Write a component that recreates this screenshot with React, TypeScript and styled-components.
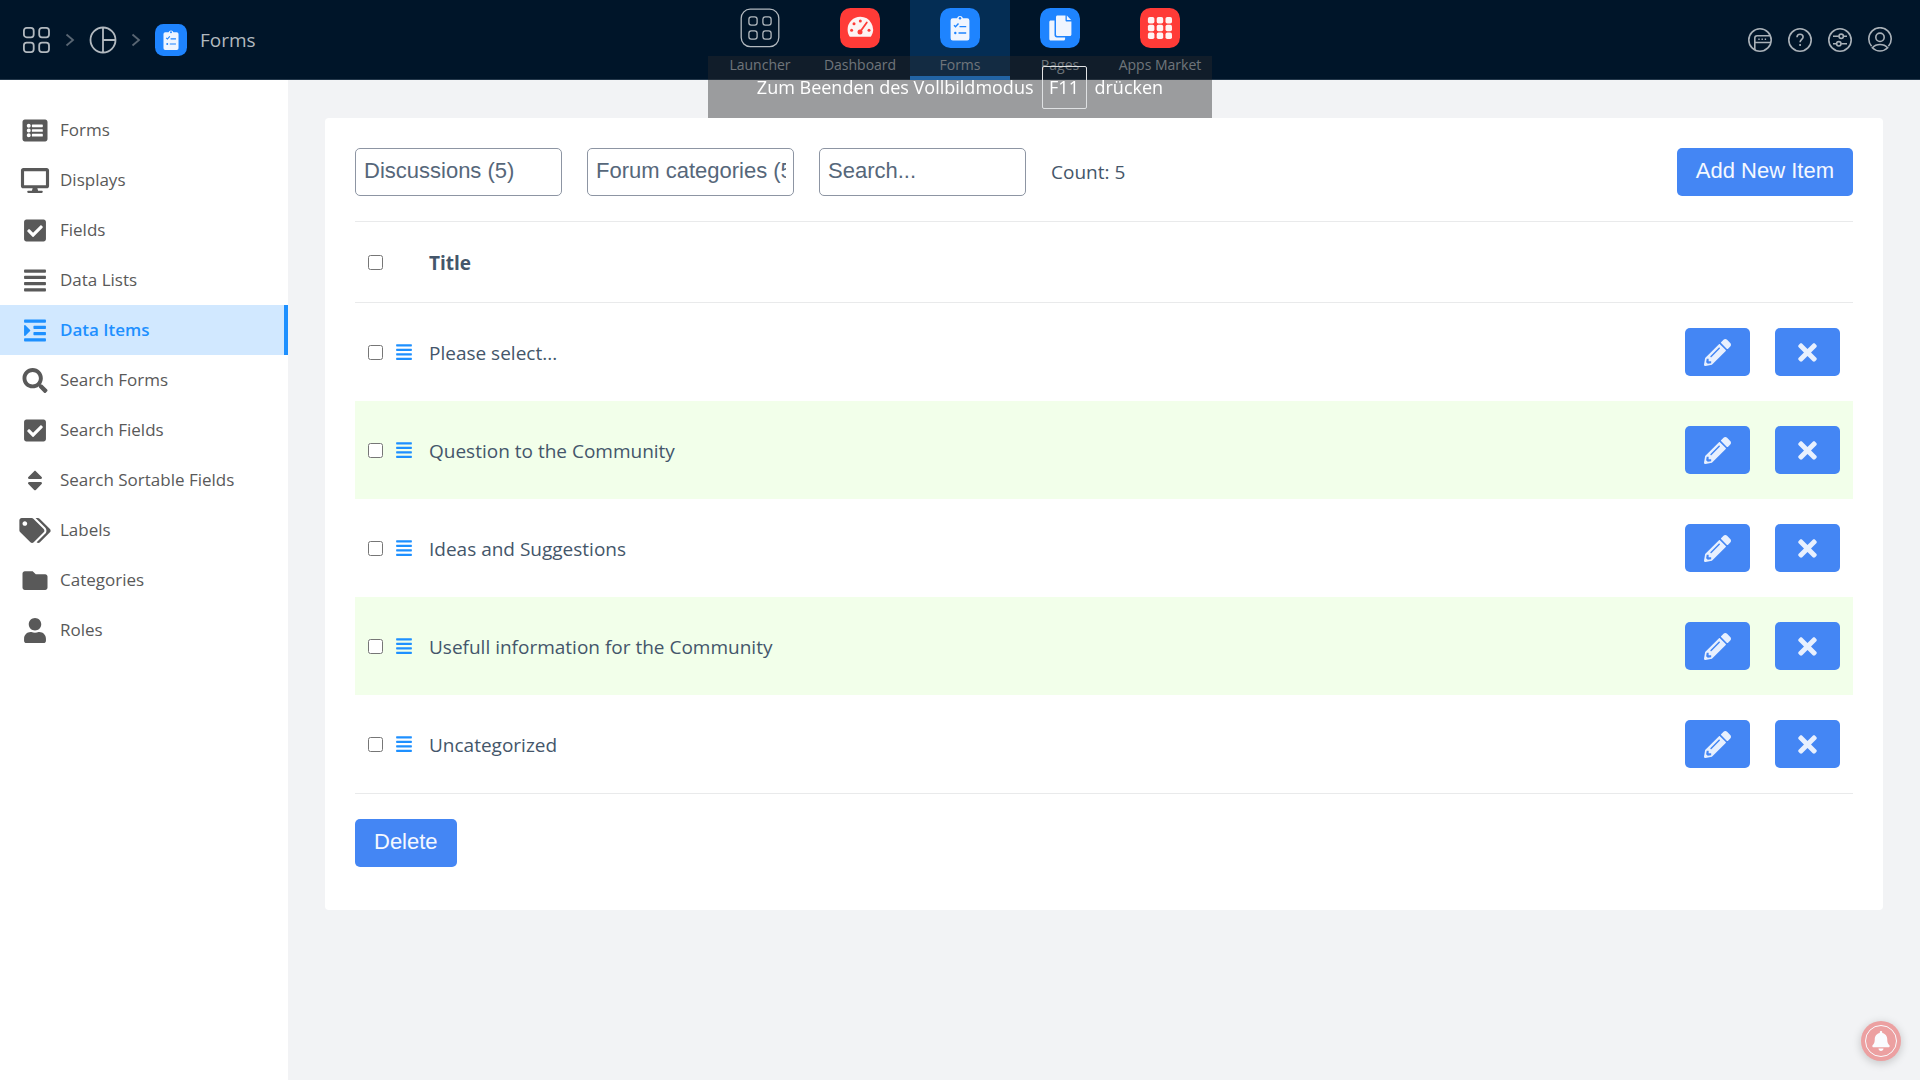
import React from "react";
import styled, { createGlobalStyle } from "styled-components";
import {
  FaAlignJustify,
  FaBell,
  FaCheckSquare,
  FaDesktop,
  FaFolder,
  FaIndent,
  FaListAlt,
  FaPencilAlt,
  FaSearch,
  FaSort,
  FaTags,
  FaTimes,
  FaUser,
} from "react-icons/fa";

const color = {
  navy: "#001529",
  blue: "#1e90ff",
  tileBlue: "#1e84ff",
  tileRed: "#ff3b37",
  button: "#4486f4",
  page: "#f2f3f5",
  text: "#44566a",
  line: "#e9eaeb",
};

const GlobalStyle = createGlobalStyle`
  *, *::before, *::after { box-sizing: border-box; }
  body {
    margin: 0;
    background: ${color.page};
    color: ${color.text};
    font-family: "Segoe UI", "Open Sans", "Noto Sans", sans-serif;
    font-size: 19px;
    line-height: 24px;
  }
  a { color: inherit; text-decoration: none; }
`;

const Shell = styled.div`
  display: flex;
  flex-direction: column;
  min-height: 100vh;
`;

const Header = styled.header`
  display: grid;
  grid-template-columns: 1fr auto 1fr;
  height: 80px;
  background: ${color.navy};
  border-bottom: 1px solid #24384b;
`;

const Breadcrumb = styled.nav`
  display: flex;
  align-items: center;
  gap: 14px;
  padding-left: 22px;
  color: #b2b9bf;
`;

const Crumb = styled.a`
  display: flex;
  align-items: center;
  gap: 13px;
`;

const Separator = styled.svg`
  width: 10px;
  height: 14px;
  color: #596673;
`;

const Tabs = styled.nav`
  display: flex;
`;

const Tab = styled.a<{ $active?: boolean }>`
  display: flex;
  flex-direction: column;
  align-items: center;
  gap: 7px;
  width: 100px;
  height: 80px;
  padding-top: 8px;
  color: #a5adb6;
  font-size: 14px;
  line-height: 20px;
  white-space: nowrap;
  background: ${(p) => (p.$active ? "#042d54" : "transparent")};
  box-shadow: ${(p) => (p.$active ? `inset 0 -4px ${color.blue}` : "none")};
`;

const Tile = styled.svg<{ $size: number }>`
  width: ${(p) => p.$size}px;
  height: ${(p) => p.$size}px;
`;

const Tools = styled.div`
  display: flex;
  align-items: center;
  justify-content: flex-end;
  gap: 14px;
  padding-right: 27px;
`;

const ToolButton = styled.button`
  display: flex;
  padding: 0;
  border: 0;
  background: none;
  color: #a9b1b8;
  cursor: pointer;

  svg {
    width: 26px;
    height: 26px;
  }
`;

const Body = styled.div`
  display: flex;
  flex: 1;
`;

const Sidebar = styled.nav`
  flex: 0 0 288px;
  padding-top: 25px;
  background: #fff;
`;

const SideLink = styled.a<{ $active?: boolean }>`
  display: flex;
  align-items: center;
  gap: 9px;
  height: 50px;
  padding-left: 19px;
  font-size: 17px;
  font-weight: ${(p) => (p.$active ? 600 : 400)};
  color: ${(p) => (p.$active ? color.blue : "#595959")};
  background: ${(p) => (p.$active ? "#d1e8ff" : "transparent")};
  border-right: 4px solid ${(p) => (p.$active ? color.blue : "transparent")};

  svg {
    flex: none;
    width: 32px;
    height: 25px;
  }
`;

const Main = styled.main`
  flex: 1;
  min-width: 0;
  padding: 38px 37px;
`;

const Card = styled.section`
  padding: 30px 30px 43px;
  background: #fff;
  border-radius: 4px;
`;

const Toolbar = styled.div`
  display: flex;
  align-items: center;
  gap: 25px;
  margin-bottom: 25px;
`;

const fieldStyle = `
  width: 207px;
  height: 48px;
  padding: 0 7px 3px 8px;
  border: 1px solid #8d95a3;
  border-radius: 5px;
  background: #fff;
  color: #56677a;
  font: 22px "Liberation Sans", Arial, sans-serif;
`;

const Select = styled.select`
  ${fieldStyle}
  appearance: none;
`;

const SearchInput = styled.input`
  ${fieldStyle}
  &::placeholder {
    color: #56677a;
  }
`;

const Button = styled.button`
  height: 48px;
  padding: 0 19px 3px;
  border: 0;
  border-radius: 5px;
  background: ${color.button};
  color: #f4f8ff;
  font: 22px "Liberation Sans", Arial, sans-serif;
  cursor: pointer;
`;

const AddButton = styled(Button)`
  margin-left: auto;
`;

const Table = styled.table`
  width: 100%;
  margin-bottom: 25px;
  border-spacing: 0;
  border-bottom: 1px solid ${color.line};
`;

const HeadCell = styled.th`
  height: 82px;
  padding: 0;
  border-top: 1px solid ${color.line};
  border-bottom: 1px solid ${color.line};
  text-align: left;
  font-weight: 700;
`;

const TitleHeadCell = styled(HeadCell)`
  padding-top: 2px;
`;

const Row = styled.tr`
  &:nth-child(even) {
    background: #f2ffea;
  }
`;

const Cell = styled.td`
  height: 98px;
  padding: 0;
`;

const TitleCell = styled(Cell)`
  padding-top: 2px;
`;

const Controls = styled.div`
  display: flex;
  align-items: center;
  gap: 12px;
  width: 74px;
  padding-left: 13px;
`;

const Checkbox = styled.input`
  width: 15px;
  height: 15px;
  margin: 0;
`;

const DragHandle = styled(FaAlignJustify)`
  width: 18px;
  height: 18px;
  color: ${color.blue};
`;

const Actions = styled.div`
  display: flex;
  justify-content: flex-end;
  gap: 25px;
  padding-right: 13px;
`;

const IconButton = styled.button`
  display: flex;
  align-items: center;
  justify-content: center;
  width: 65px;
  height: 48px;
  padding: 0;
  border: 0;
  border-radius: 5px;
  background: ${color.button};
  color: #e8f0fe;
  cursor: pointer;

  svg {
    width: 27px;
    height: 27px;
  }
`;

const FullscreenHint = styled.div`
  position: fixed;
  top: 56px;
  left: 50%;
  transform: translateX(-50%);
  display: flex;
  justify-content: center;
  gap: 8px;
  width: 504px;
  height: 62px;
  padding-top: 10px;
  background: rgba(40, 42, 44, 0.43);
  color: #fff;
  font-size: 18px;
  line-height: 42px;
  white-space: nowrap;
  pointer-events: none;
`;

const Key = styled.kbd`
  width: 45px;
  height: 43px;
  border: 1px solid #dfe1e3;
  border-radius: 2px;
  font: inherit;
  line-height: 40px;
  text-align: center;
`;

const BellButton = styled.button`
  position: fixed;
  right: 19px;
  bottom: 19px;
  display: flex;
  align-items: center;
  justify-content: center;
  width: 40px;
  height: 40px;
  padding: 0;
  border: 0;
  border-radius: 50%;
  background: #eca0a1;
  color: #fafcff;
  box-shadow: 0 2px 10px rgba(0, 0, 0, 0.2);
  cursor: pointer;
`;

const BellRing = styled.span`
  display: flex;
  align-items: center;
  justify-content: center;
  width: 32px;
  height: 32px;
  border: 1px solid #fafcff;
  border-radius: 50%;

  svg {
    width: 20px;
    height: 20px;
  }
`;

type TileName = "launcher" | "dashboard" | "forms" | "pages" | "market";

const tileBackground: Record<TileName, string> = {
  launcher: "none",
  dashboard: color.tileRed,
  forms: color.tileBlue,
  pages: color.tileBlue,
  market: color.tileRed,
};

function Glyph({ name }: { name: TileName }) {
  switch (name) {
    case "launcher":
      return (
        <g fill="none" stroke="#b2b9bf" strokeWidth="1.3">
          <rect x="1.2" y="1.2" width="37.6" height="37.4" rx="9" />
          {[8.9, 22.9].map((x) =>
            [8.9, 22.9].map((y) => (
              <rect key={`${x}-${y}`} x={x} y={y} width="8.2" height="8.2" rx="2.4" />
            ))
          )}
        </g>
      );
    case "dashboard":
      return (
        <g>
          <path
            fill="#fdf3f3"
            d="M20.3 8.8A12.7 12.7 0 0 0 7.6 21.5c0 2.4.6 4.6 1.7 6.4.3.6.9.9 1.5.9h19c.6 0 1.2-.3 1.5-.9A12.7 12.7 0 0 0 20.3 8.8z"
          />
          <g fill={color.tileRed}>
            <circle cx="11.6" cy="22.3" r="1.5" />
            <circle cx="14" cy="15.7" r="1.5" />
            <circle cx="20.3" cy="13.1" r="1.5" />
            <circle cx="29" cy="22.3" r="1.5" />
            <circle cx="20" cy="24" r="2.5" />
          </g>
          <path d="M20 24l6.8-9.6" stroke={color.tileRed} strokeWidth="1.8" strokeLinecap="round" />
        </g>
      );
    case "forms":
      return (
        <g>
          <path
            fill="#eff5ff"
            d="M12.8 10.2h4.2a3.2 3.2 0 0 1 6 0h4.2a2.2 2.2 0 0 1 2.2 2.2v17.8a2.2 2.2 0 0 1-2.2 2.2H12.8a2.2 2.2 0 0 1-2.2-2.2V12.4a2.2 2.2 0 0 1 2.2-2.2z"
          />
          <circle cx="20" cy="10.3" r="1.2" fill={color.tileBlue} />
          <g fill="none" stroke={color.tileBlue} strokeWidth="1.4">
            <path d="M14 17.3l1.5 1.5 3-3.3M19.5 18.6h6.7M18.5 25h7.7" />
          </g>
          <circle cx="15.3" cy="25" r="1.2" fill={color.tileBlue} />
        </g>
      );
    case "pages":
      return (
        <g fill="#eff5ff">
          <path d="M17.5 7.4h8v4.8c0 .8.5 1.3 1.3 1.3h4.6v13c0 .9-.6 1.5-1.5 1.5H17.5c-.9 0-1.5-.6-1.5-1.5V8.9c0-.9.6-1.5 1.5-1.5z" />
          <path d="M26.8 7.6l4.4 4.5h-4.4z" />
          <path d="M10.8 12.4h3.7v14.7c0 1.4 1 2.4 2.4 2.4h8.2v1.4c0 .9-.6 1.5-1.5 1.5H10.8c-.9 0-1.5-.6-1.5-1.5V13.9c0-.9.6-1.5 1.5-1.5z" />
        </g>
      );
    case "market":
      return (
        <g fill="#fff3f3">
          {[7.9, 16.7, 25.5].map((x) =>
            [9, 16.8, 24.6].map((y) => (
              <rect key={`${x}-${y}`} x={x} y={y} width="6.5" height="6.5" rx="1.8" />
            ))
          )}
        </g>
      );
  }
}

function AppTile({ name, size }: { name: TileName; size: number }) {
  return (
    <Tile $size={size} viewBox="0 0 40 40" aria-hidden="true">
      <rect width="40" height="40" rx="10.5" fill={tileBackground[name]} />
      <Glyph name={name} />
    </Tile>
  );
}

function Chevron() {
  return (
    <Separator viewBox="0 0 10 14" fill="none" stroke="currentColor" strokeWidth="1.8" aria-hidden="true">
      <path d="M1.5 1.5L8 7l-6.5 5.5" />
    </Separator>
  );
}

const tabs: { name: TileName; label: string; active?: boolean }[] = [
  { name: "launcher", label: "Launcher" },
  { name: "dashboard", label: "Dashboard" },
  { name: "forms", label: "Forms", active: true },
  { name: "pages", label: "Pages" },
  { name: "market", label: "Apps Market" },
];

const tools = [
  {
    label: "Messages",
    drawing: (
      <>
        <circle cx="13" cy="13" r="11.2" />
        <path d="M7.8 23V11c0-1.5.8-2.3 2.3-2.3h13M8 15.5h16" />
        <path d="M11.3 12.3h1.4M14.5 12.3h1.4M17.7 12.3h1.4" />
      </>
    ),
  },
  {
    label: "Help",
    drawing: (
      <>
        <circle cx="13" cy="13" r="11.2" />
        <path d="M10 10.3c0-1.9 1.3-3 3.1-3s3 1.1 3 2.8c0 2.2-3 2.5-3 5.2M13.1 17v2" />
      </>
    ),
  },
  {
    label: "Settings",
    drawing: (
      <>
        <circle cx="13" cy="13" r="11.2" />
        <path d="M6 9.3h5.8M16.6 9.3H20M6 16.8h3.4M14.2 16.8H20" />
        <circle cx="14.2" cy="9.3" r="2.2" />
        <circle cx="11.8" cy="16.8" r="2.2" />
      </>
    ),
  },
  {
    label: "Account",
    drawing: (
      <>
        <path d="M4.6 19.3A11.2 11.2 0 1 1 21.4 19.3" />
        <circle cx="13" cy="10.3" r="4.2" />
        <path d="M5.3 20.7c4-4.3 11.4-4.3 15.4 0-4.4 4.3-11 4.3-15.4 0z" />
      </>
    ),
  },
];

const sideLinks = [
  { label: "Forms", Icon: FaListAlt },
  { label: "Displays", Icon: FaDesktop },
  { label: "Fields", Icon: FaCheckSquare },
  { label: "Data Lists", Icon: FaAlignJustify },
  { label: "Data Items", Icon: FaIndent, active: true },
  { label: "Search Forms", Icon: FaSearch },
  { label: "Search Fields", Icon: FaCheckSquare },
  { label: "Search Sortable Fields", Icon: FaSort },
  { label: "Labels", Icon: FaTags },
  { label: "Categories", Icon: FaFolder },
  { label: "Roles", Icon: FaUser },
];

const items = [
  "Please select...",
  "Question to the Community",
  "Ideas and Suggestions",
  "Usefull information for the Community",
  "Uncategorized",
];

export default function App() {
  return (
    <Shell>
      <GlobalStyle />
      <Header>
        <Breadcrumb aria-label="Breadcrumb">
          <Crumb href="#launcher" aria-label="Launcher">
            <svg width="29" height="28" viewBox="0 0 29 28" fill="none" stroke="currentColor" strokeWidth="1.8">
              <rect x="1.9" y="1.9" width="9.8" height="9.4" rx="2.8" />
              <rect x="17.2" y="1.9" width="9.8" height="9.4" rx="2.8" />
              <rect x="1.9" y="16.7" width="9.8" height="9.4" rx="2.8" />
              <rect x="17.2" y="16.7" width="9.8" height="9.4" rx="2.8" />
            </svg>
          </Crumb>
          <Chevron />
          <Crumb href="#overview" aria-label="Overview">
            <svg width="28" height="28" viewBox="0 0 28 28" fill="none" stroke="currentColor" strokeWidth="1.8">
              <circle cx="14" cy="14" r="12.5" />
              <path d="M14 1.5v25M14 14h12.5" />
            </svg>
          </Crumb>
          <Chevron />
          <Crumb href="#forms">
            <AppTile name="forms" size={32} />
            Forms
          </Crumb>
        </Breadcrumb>
        <Tabs aria-label="Apps">
          {tabs.map((tab) => (
            <Tab key={tab.name} href={`#${tab.name}`} $active={tab.active}>
              <AppTile name={tab.name} size={40} />
              {tab.label}
            </Tab>
          ))}
        </Tabs>
        <Tools>
          {tools.map((tool) => (
            <ToolButton key={tool.label} type="button" aria-label={tool.label}>
              <svg viewBox="0 0 26 26" fill="none" stroke="currentColor" strokeWidth="1.6">
                {tool.drawing}
              </svg>
            </ToolButton>
          ))}
        </Tools>
      </Header>

      <Body>
        <Sidebar aria-label="Forms">
          {sideLinks.map(({ label, Icon, active }) => (
            <SideLink key={label} href="#" $active={active}>
              <Icon aria-hidden="true" />
              {label}
            </SideLink>
          ))}
        </Sidebar>

        <Main>
          <Card>
            <Toolbar>
              <Select aria-label="Form">
                <option>Discussions (5)</option>
              </Select>
              <Select aria-label="Data list">
                <option>Forum categories (5)</option>
              </Select>
              <SearchInput type="text" placeholder="Search..." aria-label="Search" />
              <span>Count: 5</span>
              <AddButton type="button">Add New Item</AddButton>
            </Toolbar>

            <Table>
              <thead>
                <tr>
                  <HeadCell>
                    <Controls>
                      <Checkbox type="checkbox" aria-label="Select all" />
                    </Controls>
                  </HeadCell>
                  <TitleHeadCell scope="col">Title</TitleHeadCell>
                  <HeadCell />
                </tr>
              </thead>
              <tbody>
                {items.map((item) => (
                  <Row key={item}>
                    <Cell width="74">
                      <Controls>
                        <Checkbox type="checkbox" aria-label={`Select ${item}`} />
                        <DragHandle aria-hidden="true" />
                      </Controls>
                    </Cell>
                    <TitleCell>{item}</TitleCell>
                    <Cell>
                      <Actions>
                        <IconButton type="button" aria-label={`Edit ${item}`}>
                          <FaPencilAlt />
                        </IconButton>
                        <IconButton type="button" aria-label={`Delete ${item}`}>
                          <FaTimes />
                        </IconButton>
                      </Actions>
                    </Cell>
                  </Row>
                ))}
              </tbody>
            </Table>

            <Button type="button">Delete</Button>
          </Card>
        </Main>
      </Body>

      <FullscreenHint role="status">
        <span>Zum Beenden des Vollbildmodus</span>
        <Key>F11</Key>
        <span>drücken</span>
      </FullscreenHint>

      <BellButton type="button" aria-label="Notifications">
        <BellRing>
          <FaBell />
        </BellRing>
      </BellButton>
    </Shell>
  );
}
